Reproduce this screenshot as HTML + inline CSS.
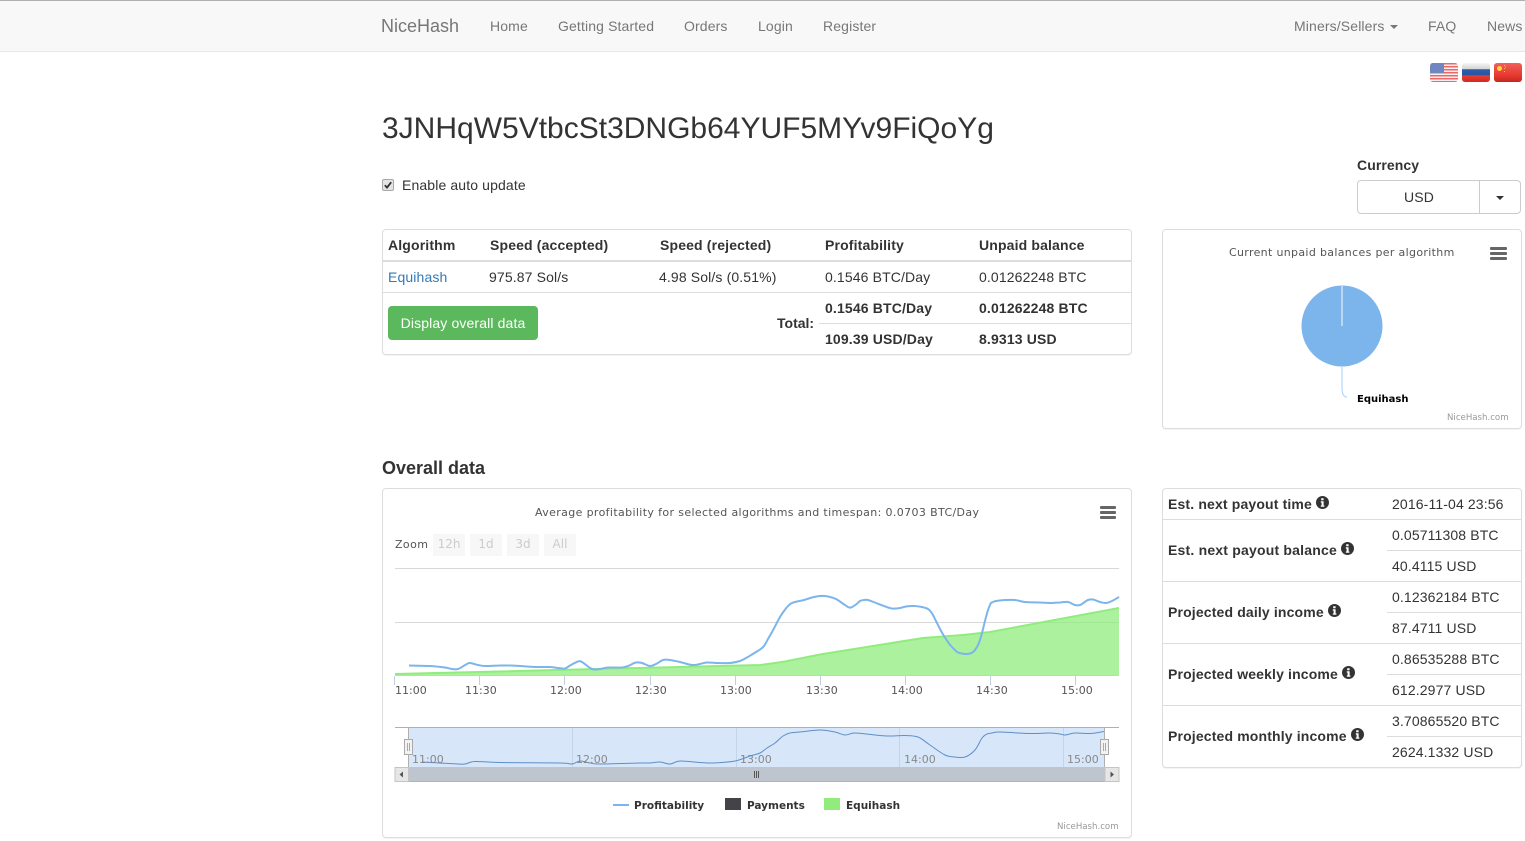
<!DOCTYPE html>
<html lang="en"><head><meta charset="utf-8"><title>NiceHash</title>
<style>
html,body{margin:0;padding:0;background:#fff;width:1525px;height:841px;overflow:hidden}
body{font-family:"Liberation Sans",Arial,sans-serif;font-size:14px;color:#333;position:relative;letter-spacing:.13px}
.t{position:absolute;white-space:nowrap;line-height:20px}
.b{font-weight:bold;letter-spacing:.15px}
.n{color:#777}
.box{position:absolute;box-sizing:border-box;border:1px solid #ddd;border-radius:4px;background:#fff;box-shadow:0 1px 1px rgba(0,0,0,.05)}
.l{position:absolute;background:#ddd;height:1px}
.c{font-family:"DejaVu Sans",sans-serif;font-size:11px;color:#555;letter-spacing:0}
.lg{font-family:"DejaVu Sans",sans-serif;font-size:10.5px;font-weight:bold;color:#333;letter-spacing:0}
.cr{font-family:"DejaVu Sans",sans-serif;font-size:8.6px;color:#999;letter-spacing:0}
svg{position:absolute;left:0;top:0}
svg.i{position:static;display:inline-block;vertical-align:0;margin-left:0}
</style></head><body>

<div style="position:absolute;left:0;top:0;width:1525px;height:52px;box-sizing:border-box;background:#f8f8f8;border-top:1px solid #b0b0b0;border-bottom:1px solid #e7e7e7"></div>
<div class="t n" style="left:381px;top:16px;font-size:18px;letter-spacing:0">NiceHash</div>
<div class="t n" style="left:490px;top:16px">Home</div>
<div class="t n" style="left:558px;top:16px">Getting Started</div>
<div class="t n" style="left:684px;top:16px">Orders</div>
<div class="t n" style="left:758px;top:16px">Login</div>
<div class="t n" style="left:823px;top:16px">Register</div>
<div class="t n" style="left:1294px;top:16px">Miners/Sellers</div>
<div style="position:absolute;left:1390px;top:25px;border-left:4px solid transparent;border-right:4px solid transparent;border-top:4px solid #777"></div>
<div class="t n" style="left:1428px;top:16px">FAQ</div>
<div class="t n" style="left:1487px;top:16px">News</div>

<!-- flags -->
<div style="position:absolute;left:1430px;top:63px;width:28px;height:19px;border-radius:3px;overflow:hidden;background:repeating-linear-gradient(#e8696a 0,#e8696a 1.5px,#fbeeee 1.5px,#fbeeee 3px)"><div style="width:14px;height:10px;background:#6f86c0"></div></div>
<div style="position:absolute;left:1462px;top:63px;width:28px;height:19px;border-radius:3px;overflow:hidden;background:linear-gradient(#f6f6f6 0,#d4d4d4 6px,#2f5cae 6.5px,#2a54a2 12px,#e63e32 12.5px,#d2281f 19px)"></div>
<div style="position:absolute;left:1494px;top:63px;width:28px;height:19px;border-radius:3px;overflow:hidden;background:linear-gradient(#f0605a,#e8382f 65%,#c4261e)"><div style="position:absolute;left:3px;top:3px;width:5px;height:5px;background:#ffd83a;border-radius:50%"></div><div style="position:absolute;left:10px;top:2px;width:1px;height:1px;background:#f5c73a;box-shadow:0 3px #f5c73a,0 6px #f5c73a,1px 1.5px #f5c73a"></div></div>

<div class="t" style="left:382px;top:109px;font-size:30px;line-height:40px;color:#333;letter-spacing:0">3JNHqW5VtbcSt3DNGb64YUF5MYv9FiQoYg</div>
<input type="checkbox" checked style="position:absolute;left:382px;top:179px;margin:0;width:12px;height:12px;appearance:none;-webkit-appearance:none;box-sizing:border-box;background:#e4e4e4;border:1px solid #a8a8a8;border-radius:2px">
<svg width="12" height="12" viewBox="0 0 12 12" style="left:382px;top:179px"><path d="M2.8 6.2L5 8.6L9.2 3.2" fill="none" stroke="#333" stroke-width="1.8"/></svg>
<div class="t" style="left:402px;top:175px">Enable auto update</div>

<div class="t b" style="left:1357px;top:155px;letter-spacing:.08px">Currency</div>
<div style="position:absolute;left:1357px;top:180px;width:164px;height:34px;box-sizing:border-box;border:1px solid #ccc;border-radius:4px"></div>
<div style="position:absolute;left:1479px;top:180px;width:1px;height:34px;background:#ccc"></div>
<div class="t" style="left:1404px;top:187px">USD</div>
<div style="position:absolute;left:1496px;top:196px;border-left:4px solid transparent;border-right:4px solid transparent;border-top:4px solid #333"></div>

<!-- main table -->
<div class="box" style="left:382px;top:229px;width:750px;height:126px"></div>
<div class="l" style="left:383px;top:260px;width:748px;height:2px"></div>
<div class="l" style="left:383px;top:292px;width:748px"></div>
<div class="l" style="left:819px;top:323px;width:312px"></div>
<div class="t b" style="left:388px;top:235px">Algorithm</div>
<div class="t b" style="left:490px;top:235px">Speed (accepted)</div>
<div class="t b" style="left:660px;top:235px">Speed (rejected)</div>
<div class="t b" style="left:825px;top:235px">Profitability</div>
<div class="t b" style="left:979px;top:235px">Unpaid balance</div>
<div class="t" style="left:388px;top:267px;color:#337ab7">Equihash</div>
<div class="t" style="left:489px;top:267px">975.87 Sol/s</div>
<div class="t" style="left:659px;top:267px">4.98 Sol/s (0.51%)</div>
<div class="t" style="left:825px;top:267px">0.1546 BTC/Day</div>
<div class="t" style="left:979px;top:267px">0.01262248 BTC</div>
<div class="t b" style="left:825px;top:298px">0.1546 BTC/Day</div>
<div class="t b" style="left:979px;top:298px">0.01262248 BTC</div>
<div class="t b" style="left:777px;top:313px;letter-spacing:0">Total:</div>
<div class="t b" style="left:825px;top:329px">109.39 USD/Day</div>
<div class="t b" style="left:979px;top:329px">8.9313 USD</div>
<div class="t" style="left:388px;top:306px;width:150px;height:34px;line-height:34px;background:#5cb85c;border-radius:4px;color:#fff;text-align:center">Display overall data</div>

<!-- pie panel -->
<div class="box" style="left:1162px;top:229px;width:360px;height:200px"></div>
<div class="t c" style="left:1229px;top:243px;letter-spacing:.33px">Current unpaid balances per algorithm</div>
<div class="t" style="left:1357px;top:390px;font-family:'DejaVu Sans',sans-serif;font-size:10px;font-weight:bold;letter-spacing:0;color:#000">Equihash</div>
<div class="t cr" style="left:1447px;top:408px">NiceHash.com</div>

<div class="t" style="left:382px;top:457px;font-size:18px;font-weight:bold;line-height:22px;letter-spacing:0">Overall data</div>

<!-- chart panel -->
<div class="box" style="left:382px;top:488px;width:750px;height:350px"></div>
<div class="t c" style="left:535px;top:503px;letter-spacing:.365px">Average profitability for selected algorithms and timespan: 0.0703 BTC/Day</div>
<div class="t c" style="left:395px;top:535px;letter-spacing:.4px">Zoom</div>
<div class="t c" style="left:433px;top:534px;width:32px;height:22px;line-height:20px;background:#f7f7f7;color:#ccc;text-align:center;font-size:12px">12h</div>
<div class="t c" style="left:470px;top:534px;width:32px;height:22px;line-height:20px;background:#f7f7f7;color:#ccc;text-align:center;font-size:12px">1d</div>
<div class="t c" style="left:507px;top:534px;width:32px;height:22px;line-height:20px;background:#f7f7f7;color:#ccc;text-align:center;font-size:12px">3d</div>
<div class="t c" style="left:544px;top:534px;width:32px;height:22px;line-height:20px;background:#f7f7f7;color:#ccc;text-align:center;font-size:12px">All</div>

<svg width="1525" height="841" viewBox="0 0 1525 841">
<!-- menu icons -->
<g fill="#666"><rect x="1100" y="506" width="16" height="3" rx="1"/><rect x="1100" y="511" width="16" height="3" rx="1"/><rect x="1100" y="516" width="16" height="3" rx="1"/>
<rect x="1490" y="247" width="17" height="3" rx="1"/><rect x="1490" y="252" width="17" height="3" rx="1"/><rect x="1490" y="257" width="17" height="3" rx="1"/></g>
<!-- pie -->
<circle cx="1342" cy="326" r="40.5" fill="#7cb5ec"/>
<path d="M1342 286V326" stroke="#e4effa" stroke-width="1.2"/>
<path d="M1342 367V388Q1342 397 1347 397" fill="none" stroke="#a9cff5" stroke-width="1"/>
<!-- grid -->
<path d="M395 568.5H1119M395 622.5H1119" stroke="#d8d8d8"/>
<!-- area -->
<path d="M395 674L760 665Q772 663.5 785 661.5L820 654.5L923 638L963 635L990 632L1119 608V676H395Z" fill="#90ed7d" fill-opacity=".75"/>
<path d="M395 674L760 665Q772 663.5 785 661.5L820 654.5L923 638L963 635L990 632L1119 608" fill="none" stroke="#90ed7d" stroke-width="2"/>
<!-- profit line -->
<path class="sm" fill="none" stroke="#7cb5ec" stroke-width="2" stroke-linejoin="round" data-p="409,665.5 430,666 445,667.5 452,669 458,669 466,664.5 470,663 478,665 485,666 500,665.5 510,665.5 520,666 535,667 550,667 558,668 565,668.5 570,665.5 578,661.5 582,662 590,668 594,669.5 600,669 608,667.5 622,667.5 628,666 636,662.5 642,663 650,666 656,664 663,660 670,660 680,662 692,665 700,664 707,662.5 718,663 730,663 740,661 746,658 752,654.5 756,652 760,649.5 764,646 768,639 772,632 776,624.5 780,617 784,611 788,606 791,603.5 795,602 804,600 812,597.5 820,596 828,596.5 836,599 842,603 848,607 851,607.5 856,604.5 860,601 864,600 868,600 876,603 884,606 892,608.5 900,608 906,606.5 914,606 922,607 928,609 931,612 933,615 936,621 940,629 944,636 948,642 951,646 955,650 958,652.5 962,653.5 966,654 970,653.5 973,652 975,650 978,645 980,640 982,633 984,625 986,617 988,610 990,605 991,603 993,602 996,601 1005,600 1015,600 1025,602 1040,602.5 1050,603 1060,602.5 1068,602 1075,605 1080,605 1084,602.5 1088,600 1093,599.5 1100,602 1106,603 1112,601 1119,597" d="M409 665.5L1119 597"/>
<!-- axis -->
<path d="M395 675.5H1119" stroke="#c0d0e0"/>
<path d="M394.5 676V685M479.5 676V685M564.5 676V685M650.5 676V685M735.5 676V685M820.5 676V685M905.5 676V685M990.5 676V685M1075.5 676V685" stroke="#c0d0e0"/>
<!-- navigator -->
<rect x="409" y="727" width="696" height="40" fill="#d7e6f8"/>
<path d="M572.5 727V767M736.5 727V767M899.5 727V767M1063.5 727V767" stroke="#c3d5e8"/>
<path class="sm" fill="none" stroke="#5f8fc6" stroke-width="1" stroke-linejoin="round" data-p="422,762 440,763 458,764 465,764 475,761.5 500,762.5 560,763 572,764 580,761 590,763 600,764 640,763 650,763 660,762 670,764 680,761 700,762.5 713,763 735,761 750,756 760,753 767,748 775,743 783,736 790,733 800,732 820,730 835,732 845,735 855,733 875,735 890,736 905,735.5 918,737 930,745 945,755 955,757 965,757 975,750 982,738 987,734 992,733 1000,732 1030,733.5 1050,733 1060,734 1065,735 1075,733 1090,733.5 1104,731.5" d="M422 762L1104 731.5"/>
<path d="M395 727.5H1119" stroke="#b0b0b0"/>
<path d="M408.5 727V767M1104.5 727V767" stroke="#b0b0b0"/>
<rect x="395" y="767" width="724" height="14" fill="#bfc5ce"/>
<path d="M395 781.5H1119" stroke="#b0b5bd"/>
<rect x="395" y="767.5" width="13.5" height="14" fill="#e6e6e6" stroke="#c4c4c4"/>
<rect x="1105" y="767.5" width="14" height="14" fill="#e6e6e6" stroke="#c4c4c4"/>
<path d="M403 771.5V777.5L399.5 774.5ZM1110.5 771.5V777.5L1114 774.5Z" fill="#555"/>
<path d="M754.5 771V778M756.5 771V778M758.5 771V778" stroke="#555"/>
<rect x="404.5" y="739.5" width="8" height="15" fill="#f2f2f2" stroke="#aaa"/>
<rect x="1100.5" y="739.5" width="8" height="15" fill="#f2f2f2" stroke="#aaa"/>
<path d="M407.5 743V751M409.5 743V751M1103.5 743V751M1105.5 743V751" stroke="#aaa"/>
<!-- legend -->
<rect x="613" y="804" width="16" height="2" fill="#7cb5ec"/>
<rect x="725" y="798" width="16" height="12" fill="#434348"/>
<rect x="824" y="798" width="16" height="12" fill="#90ed7d"/>
</svg>
<script>
document.querySelectorAll('path.sm').forEach(function(e){
var p=e.getAttribute('data-p').split(' ').map(function(s){return s.split(',').map(Number)}),d='M'+p[0][0]+' '+p[0][1];
for(var i=0;i<p.length-1;i++){var a=p[Math.max(i-1,0)],b=p[i],c=p[i+1],f=p[Math.min(i+2,p.length-1)];
var k=function(v){return v.toFixed(2)};
d+='C'+k(b[0]+(c[0]-a[0])/6)+' '+k(b[1]+(c[1]-a[1])/6)+' '+k(c[0]-(f[0]-b[0])/6)+' '+k(c[1]-(f[1]-b[1])/6)+' '+c[0]+' '+c[1];}
e.setAttribute('d',d);e.removeAttribute('data-p');});
</script>

<div class="t c" style="left:395px;top:681px">11:00</div>
<div class="t c" style="left:465px;top:681px">11:30</div>
<div class="t c" style="left:550px;top:681px">12:00</div>
<div class="t c" style="left:635px;top:681px">12:30</div>
<div class="t c" style="left:720px;top:681px">13:00</div>
<div class="t c" style="left:806px;top:681px">13:30</div>
<div class="t c" style="left:891px;top:681px">14:00</div>
<div class="t c" style="left:976px;top:681px">14:30</div>
<div class="t c" style="left:1061px;top:681px">15:00</div>

<div class="t c" style="left:412px;top:750px;color:#888">11:00</div>
<div class="t c" style="left:576px;top:750px;color:#888">12:00</div>
<div class="t c" style="left:740px;top:750px;color:#888">13:00</div>
<div class="t c" style="left:904px;top:750px;color:#888">14:00</div>
<div class="t c" style="left:1067px;top:750px;color:#888">15:00</div>

<div class="t lg" style="left:634px;top:796px">Profitability</div>
<div class="t lg" style="left:747px;top:796px">Payments</div>
<div class="t lg" style="left:846px;top:796px">Equihash</div>
<div class="t cr" style="left:1057px;top:817px">NiceHash.com</div>

<!-- stats -->
<div class="box" style="left:1162px;top:488px;width:360px;height:280px"></div>
<div class="l" style="left:1163px;top:519px;width:358px"></div>
<div class="l" style="left:1387px;top:550px;width:134px"></div>
<div class="l" style="left:1163px;top:581px;width:358px"></div>
<div class="l" style="left:1387px;top:612px;width:134px"></div>
<div class="l" style="left:1163px;top:643px;width:358px"></div>
<div class="l" style="left:1387px;top:674px;width:134px"></div>
<div class="l" style="left:1163px;top:705px;width:358px"></div>
<div class="l" style="left:1387px;top:736px;width:134px"></div>

<div class="t b" style="left:1168px;top:494px">Est. next payout time <svg class="i" width="13" height="13" viewBox="0 0 13 13"><circle cx="6.5" cy="6.5" r="6.5" fill="#333"/><path d="M5.2 2.2h2.4v2H5.2zM4.8 5.3h2.8v4.2h.8v1.3H4.8V9.5h.8V6.6h-.8z" fill="#fff"/></svg></div>
<div class="t b" style="left:1168px;top:540px;letter-spacing:.2px">Est. next payout balance <svg class="i" width="13" height="13" viewBox="0 0 13 13"><circle cx="6.5" cy="6.5" r="6.5" fill="#333"/><path d="M5.2 2.2h2.4v2H5.2zM4.8 5.3h2.8v4.2h.8v1.3H4.8V9.5h.8V6.6h-.8z" fill="#fff"/></svg></div>
<div class="t b" style="left:1168px;top:602px">Projected daily income <svg class="i" width="13" height="13" viewBox="0 0 13 13"><circle cx="6.5" cy="6.5" r="6.5" fill="#333"/><path d="M5.2 2.2h2.4v2H5.2zM4.8 5.3h2.8v4.2h.8v1.3H4.8V9.5h.8V6.6h-.8z" fill="#fff"/></svg></div>
<div class="t b" style="left:1168px;top:664px">Projected weekly income <svg class="i" width="13" height="13" viewBox="0 0 13 13"><circle cx="6.5" cy="6.5" r="6.5" fill="#333"/><path d="M5.2 2.2h2.4v2H5.2zM4.8 5.3h2.8v4.2h.8v1.3H4.8V9.5h.8V6.6h-.8z" fill="#fff"/></svg></div>
<div class="t b" style="left:1168px;top:726px">Projected monthly income <svg class="i" width="13" height="13" viewBox="0 0 13 13"><circle cx="6.5" cy="6.5" r="6.5" fill="#333"/><path d="M5.2 2.2h2.4v2H5.2zM4.8 5.3h2.8v4.2h.8v1.3H4.8V9.5h.8V6.6h-.8z" fill="#fff"/></svg></div>

<div class="t" style="left:1392px;top:494px">2016-11-04 23:56</div>
<div class="t" style="left:1392px;top:525px">0.05711308 BTC</div>
<div class="t" style="left:1392px;top:556px">40.4115 USD</div>
<div class="t" style="left:1392px;top:587px">0.12362184 BTC</div>
<div class="t" style="left:1392px;top:618px">87.4711 USD</div>
<div class="t" style="left:1392px;top:649px">0.86535288 BTC</div>
<div class="t" style="left:1392px;top:680px">612.2977 USD</div>
<div class="t" style="left:1392px;top:711px">3.70865520 BTC</div>
<div class="t" style="left:1392px;top:742px">2624.1332 USD</div>
</body></html>
